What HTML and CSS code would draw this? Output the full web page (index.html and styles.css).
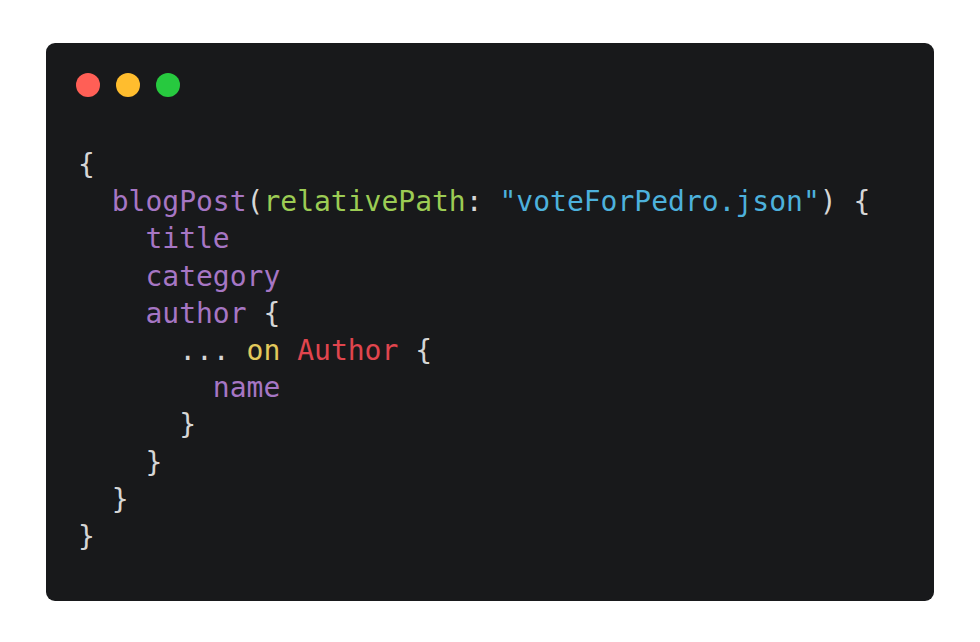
FILE: index.html
```html
<!DOCTYPE html>
<html>
<head>
<meta charset="utf-8">
<link rel="stylesheet" href="styles.css">
</head>
<body>
<div class="page">
  <div class="window">
    <div class="dots">
      <span class="dot red"></span>
      <span class="dot yellow"></span>
      <span class="dot green"></span>
    </div>
<pre class="code"><span class="p">{</span>
  <span class="f">blogPost</span><span class="p">(</span><span class="a">relativePath</span><span class="p">:</span> <span class="s">"voteForPedro.json"</span><span class="p">)</span> <span class="p">{</span>
    <span class="f">title</span>
    <span class="f">category</span>
    <span class="f">author</span> <span class="p">{</span>
      <span class="p">...</span> <span class="k">on</span> <span class="t">Author</span> <span class="p">{</span>
        <span class="f">name</span>
      <span class="p">}</span>
    <span class="p">}</span>
  <span class="p">}</span>
<span class="p">}</span></pre>
  </div>
</div>
</body>
</html>
```
FILE: styles.css
```css
html, body {
  margin: 0;
  padding: 0;
  background: #ffffff;
}
.page {
  padding: 43px 46px;
}
.window {
  box-sizing: border-box;
  width: 888px;
  height: 558px;
  background: #18191b;
  border-radius: 9px;
  padding: 30px 30px 0 30px;
}
.dots {
  display: flex;
  gap: 16px;
  height: 24px;
}
.dot {
  width: 24px;
  height: 24px;
  border-radius: 50%;
}
.red { background: #ff5f56; }
.yellow { background: #ffbd2e; }
.green { background: #27c93f; }
.code {
  margin: 49px 0 0 2px;
  font-family: "DejaVu Sans Mono", monospace;
  font-size: 28px;
  line-height: 37.2px;
  color: #d6d6d6;
}
.p { color: #d6d6d6; }
.f { color: #a676c4; }
.a { color: #9ccc54; }
.s { color: #4db1dc; }
.k { color: #e2c95c; }
.t { color: #e0454e; }
```
